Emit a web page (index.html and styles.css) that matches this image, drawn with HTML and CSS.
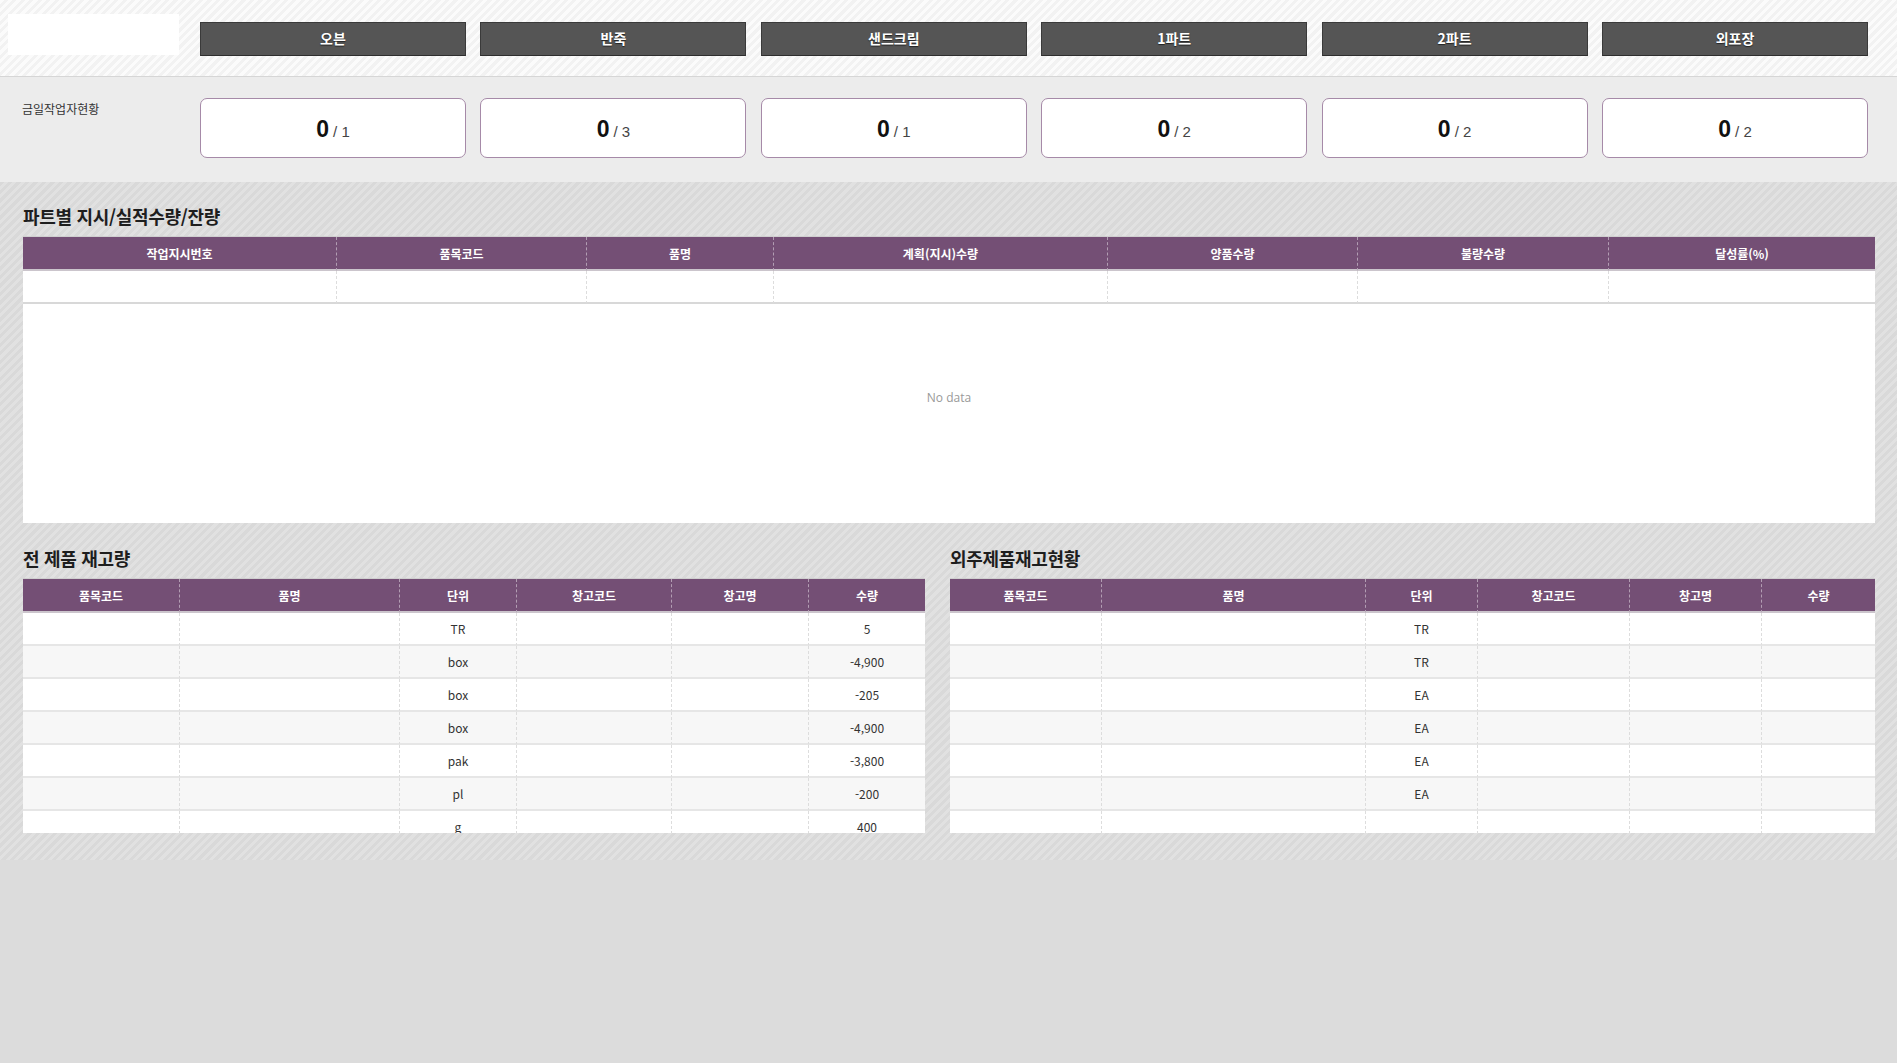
FILE: index.html
```html
<!DOCTYPE html>
<html lang="ko">
<head>
<meta charset="utf-8">
<title>현황판</title>
<link rel="stylesheet" href="styles.css">
</head>
<body>
<div class="topbar">
  <div class="logo"></div>
  <div class="parts">
    <div class="part-btn">오븐</div>
    <div class="part-btn">반죽</div>
    <div class="part-btn">샌드크림</div>
    <div class="part-btn">1파트</div>
    <div class="part-btn">2파트</div>
    <div class="part-btn">외포장</div>
  </div>
</div>
<div class="status">
  <div class="status-label">금일작업자현황</div>
  <div class="parts cards">
    <div class="card"><b>0</b><span>/ 1</span></div>
    <div class="card"><b>0</b><span>/ 3</span></div>
    <div class="card"><b>0</b><span>/ 1</span></div>
    <div class="card"><b>0</b><span>/ 2</span></div>
    <div class="card"><b>0</b><span>/ 2</span></div>
    <div class="card"><b>0</b><span>/ 2</span></div>
  </div>
</div>
<div class="main">
  <h2 class="title">파트별 지시/실적수량/잔량</h2>
  <div class="panel panel-big">
    <table class="grid">
      <colgroup>
        <col style="width:313px"><col style="width:250px"><col style="width:187px"><col style="width:334px"><col style="width:250px"><col style="width:251px"><col style="width:267px">
      </colgroup>
      <thead>
        <tr><th>작업지시번호</th><th>품목코드</th><th>품명</th><th>계획(지시)수량</th><th>양품수량</th><th>불량수량</th><th>달성률(%)</th></tr>
      </thead>
      <tbody>
        <tr class="empty-row"><td></td><td></td><td></td><td></td><td></td><td></td><td></td></tr>
      </tbody>
    </table>
    <div class="nodata">No data</div>
  </div>

  <div class="bottom">
    <section>
      <h2 class="title">전 제품 재고량</h2>
      <div class="panel panel-scroll">
        <table class="grid">
          <colgroup>
            <col style="width:156px"><col style="width:220px"><col style="width:117px"><col style="width:155px"><col style="width:137px"><col style="width:117px">
          </colgroup>
          <thead>
            <tr><th>품목코드</th><th>품명</th><th>단위</th><th>창고코드</th><th>창고명</th><th>수량</th></tr>
          </thead>
          <tbody>
            <tr><td></td><td></td><td>TR</td><td></td><td></td><td>5</td></tr>
            <tr><td></td><td></td><td>box</td><td></td><td></td><td>-4,900</td></tr>
            <tr><td></td><td></td><td>box</td><td></td><td></td><td>-205</td></tr>
            <tr><td></td><td></td><td>box</td><td></td><td></td><td>-4,900</td></tr>
            <tr><td></td><td></td><td>pak</td><td></td><td></td><td>-3,800</td></tr>
            <tr><td></td><td></td><td>pl</td><td></td><td></td><td>-200</td></tr>
            <tr><td></td><td></td><td>g</td><td></td><td></td><td>400</td></tr>
          </tbody>
        </table>
      </div>
    </section>
    <section>
      <h2 class="title">외주제품재고현황</h2>
      <div class="panel panel-scroll">
        <table class="grid">
          <colgroup>
            <col style="width:151px"><col style="width:264px"><col style="width:112px"><col style="width:152px"><col style="width:132px"><col style="width:114px">
          </colgroup>
          <thead>
            <tr><th>품목코드</th><th>품명</th><th>단위</th><th>창고코드</th><th>창고명</th><th>수량</th></tr>
          </thead>
          <tbody>
            <tr><td></td><td></td><td>TR</td><td></td><td></td><td></td></tr>
            <tr><td></td><td></td><td>TR</td><td></td><td></td><td></td></tr>
            <tr><td></td><td></td><td>EA</td><td></td><td></td><td></td></tr>
            <tr><td></td><td></td><td>EA</td><td></td><td></td><td></td></tr>
            <tr><td></td><td></td><td>EA</td><td></td><td></td><td></td></tr>
            <tr><td></td><td></td><td>EA</td><td></td><td></td><td></td></tr>
            <tr><td></td><td></td><td></td><td></td><td></td><td></td></tr>
          </tbody>
        </table>
      </div>
    </section>
  </div>
</div>
</body>
</html>
```
FILE: styles.css
```css
* { box-sizing: border-box; }
html, body { margin: 0; padding: 0; }
body {
  background: #dcdcdc;
  font-family: "Noto Sans CJK KR", "Noto Sans", sans-serif;
  color: #333;
  width: 1897px;
}

.topbar {
  height: 77px;
  border-bottom: 1px solid #d6d6d6;
  background: repeating-linear-gradient(135deg, #fbfbfb 0 3px, #f2f2f2 3px 6px);
  display: flex;
  align-items: flex-start;
  padding: 14px 0 0 8px;
}
.logo {
  width: 171px;
  height: 41px;
  background: #fff;
  margin-right: 21px;
}
.parts {
  width: 1668px;
  display: grid;
  grid-template-columns: repeat(6, 1fr);
  column-gap: 14.4px;
}
.topbar .parts { margin-top: 8px; }
.part-btn {
  height: 34px;
  background: #555555;
  border: 1px solid #3a3a3a;
  border-bottom-color: #2e2e2e;
  color: #fff;
  font-weight: 700;
  font-size: 14px;
  line-height: 31px;
  text-align: center;
  text-shadow: 0 1px 1px rgba(0,0,0,0.6);
}

.status {
  height: 105px;
  background: #ececec;
  display: flex;
  align-items: flex-start;
  padding: 21px 0 0 22px;
}
.status-label {
  width: 178px;
  font-size: 12px;
  line-height: 18px;
  margin-top: 2px;
  color: #333;
}
.card {
  height: 60px;
  background: #fff;
  border: 1px solid #a68aa8;
  border-radius: 7px;
  display: flex;
  align-items: baseline;
  justify-content: center;
  padding-top: 17px;
  gap: 4px;
}
.card b {
  font-family: "Liberation Sans", Arial, sans-serif;
  font-size: 23px;
  font-weight: 700;
  color: #111;
  line-height: 26px;
}
.card span {
  font-family: "Liberation Sans", Arial, sans-serif;
  font-size: 15px;
  color: #444;
}

.main {
  background: repeating-linear-gradient(135deg, #d9d9d9 0 3px, #e1e1e1 3px 6px);
  padding: 22px 22px 27px 23px;
}
.title {
  margin: 0 0 8px 0;
  font-size: 18px;
  line-height: 24px;
  font-weight: 700;
  color: #1e1e1e;
  letter-spacing: -0.3px;
}
.panel {
  background: #fff;
  border-top: 1px solid #cfcfcf;
  overflow: hidden;
}
.panel-big { height: 287px; }
.panel-scroll { height: 255px; }

.grid {
  width: 100%;
  table-layout: fixed;
  border-collapse: separate;
  border-spacing: 0;
}
.grid th {
  height: 34px;
  padding: 0;
  background: #744f75;
  color: #fff;
  font-size: 12px;
  font-weight: 700;
  text-align: center;
  border-left: 1px dashed rgba(255,255,255,0.45);
  border-bottom: 2px solid #cbc5cc;
}
.grid th:first-child { border-left: none; }
.grid td {
  height: 33px;
  padding: 0;
  font-size: 12px;
  color: #333;
  text-align: center;
  border-left: 1px dashed #dddddd;
  border-bottom: 2px solid #e6e6e6;
}
.grid td:first-child { border-left: none; }
.grid tbody tr:nth-child(even) td { background: #f7f7f7; }
.empty-row td { border-bottom-color: #d8d8d8; }

.nodata {
  text-align: center;
  color: #999;
  font-family: "Open Sans", "Noto Sans", sans-serif;
  font-size: 12px;
  line-height: 18px;
  padding-top: 85px;
}

.bottom {
  display: grid;
  grid-template-columns: 902px 925px;
  column-gap: 25px;
  margin-top: 23px;
}
```
